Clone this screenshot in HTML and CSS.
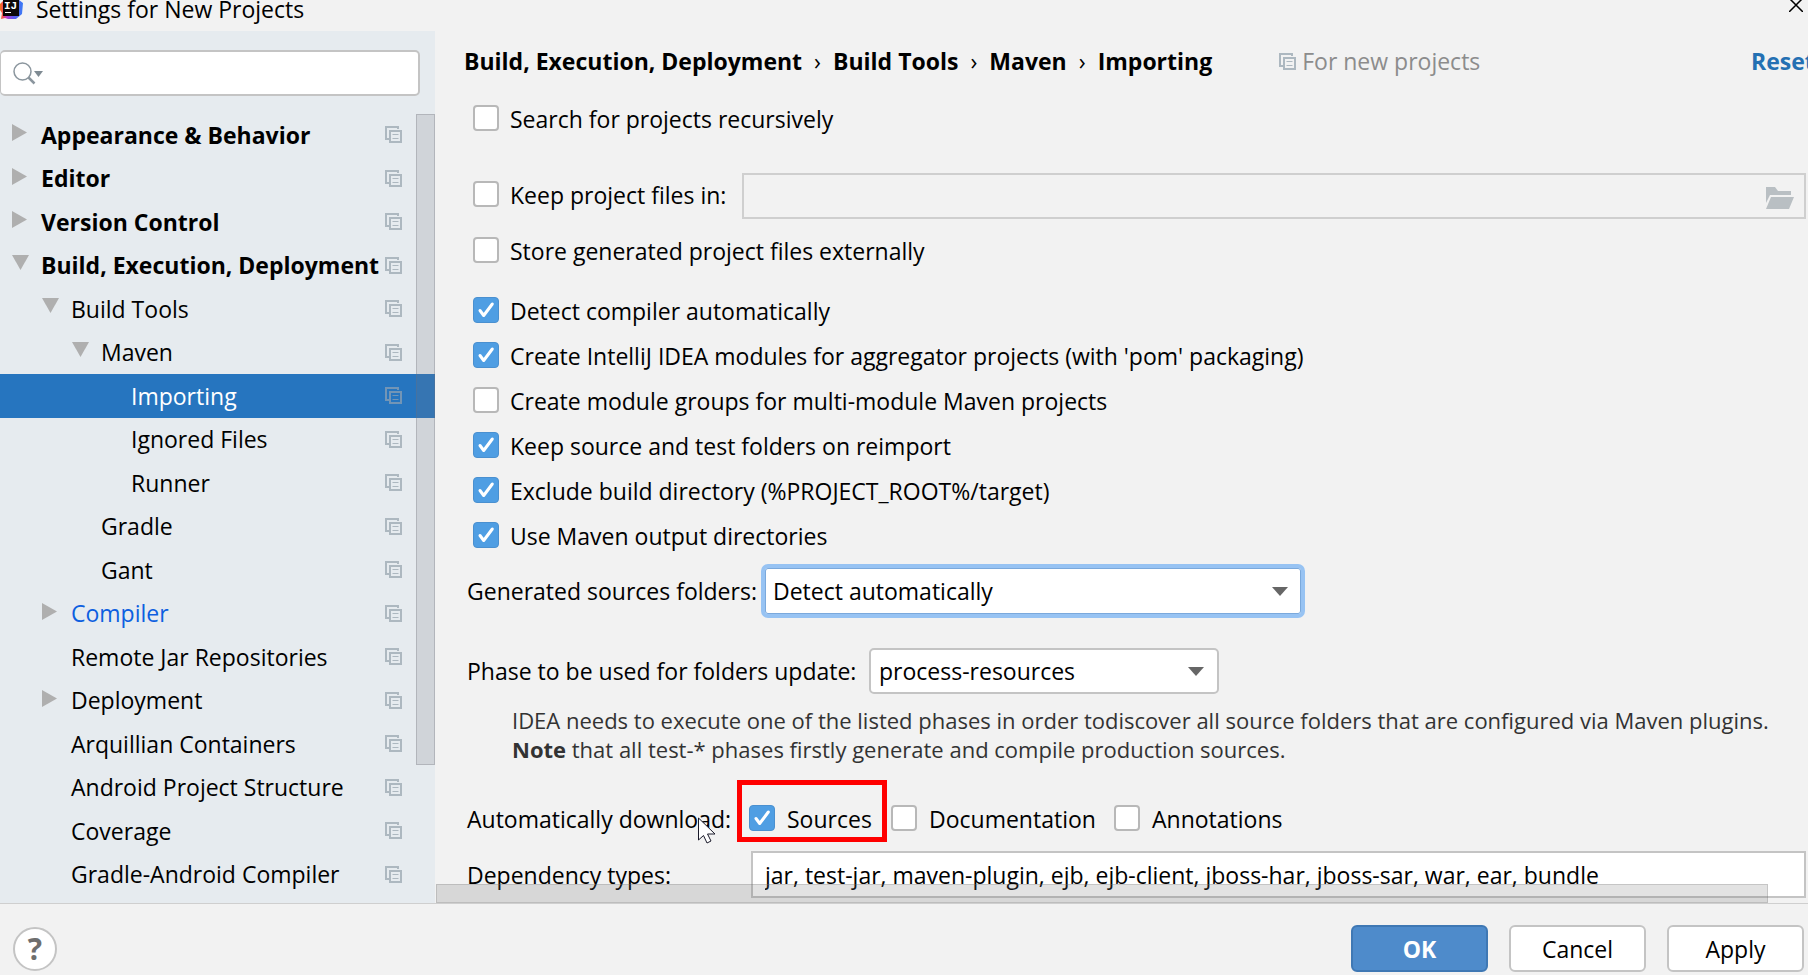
FILE: index.html
```html
<!DOCTYPE html>
<html lang="en">
<head>
<meta charset="utf-8">
<title>Settings for New Projects</title>
<link rel="stylesheet" href="styles.css">
</head>
<body>
<svg class="sprite" aria-hidden="true">
  <symbol id="copy" viewBox="0 0 17 17">
    <path d="M13 3V1H1v12h3" fill="none" stroke="currentColor" stroke-width="2"/>
    <path d="M5 5h11v11H5z" fill="none" stroke="currentColor" stroke-width="2"/>
    <path d="M7.500 8.500h6M7.500 12.500h6" stroke="currentColor" stroke-width="1.200"/>
  </symbol>
  <symbol id="right" viewBox="0 0 17 17"><path d="M0 0l15 8.500-15 8.500z" fill="#afafaf"/></symbol>
  <symbol id="down" viewBox="0 0 17 17"><path d="M0 0h17L8.500 15z" fill="#afafaf"/></symbol>
  <symbol id="caret" viewBox="0 0 16 9"><path d="M0 0h16L8 9z" fill="#666"/></symbol>
</svg>
<div class="window">
  <header class="titlebar">
    <svg class="logo" width="24" height="20" viewBox="0 0 24 20" aria-hidden="true">
      <defs><linearGradient id="lg" x1="0" x2="1"><stop offset="0" stop-color="#f97a12"/><stop offset=".15" stop-color="#f0476a"/><stop offset=".3" stop-color="#b23bd0"/><stop offset=".6" stop-color="#5a5cf0"/><stop offset="1" stop-color="#3a7cf5"/></linearGradient></defs>
      <path d="M0 4l4-4h15l4 3-1 11-6 5H8l-3-1-4 1 1-6-2-3z" fill="url(#lg)"/>
      <path d="M3 0h16v16H3z" fill="#0b0709"/>
      <path d="M5 12.500h6" stroke="#fff" stroke-width="1"/>
      <text x="4" y="9" class="logo-text">IJ</text>
    </svg>
    <h1 class="title">Settings for New Projects</h1>
    <button class="close" aria-label="Close"><svg width="14" height="14" viewBox="0 0 14 14"><path d="M0 0l14 14M14 0L0 14" stroke="#000" stroke-width="1.500"/></svg></button>
  </header>
  <div class="body">
    <aside class="sidebar">
      <div class="search">
        <svg width="30" height="23" viewBox="0 0 30 23" aria-hidden="true"><circle cx="9.500" cy="9.500" r="8.500" fill="none" stroke="#8b969e" stroke-width="1.500"/><path d="M15.500 15.500l6 6" stroke="#8b969e" stroke-width="2.500"/><path d="M21 9h9l-4.500 6z" fill="#7f8b93"/></svg>
        <input type="text" aria-label="Search settings">
      </div>
      <ul class="tree">
        <li class="bold"><svg class="tw"><use href="#right"/></svg><span>Appearance &amp; Behavior</span><svg class="cp"><use href="#copy"/></svg></li>
        <li class="bold"><svg class="tw"><use href="#right"/></svg><span>Editor</span><svg class="cp"><use href="#copy"/></svg></li>
        <li class="bold"><svg class="tw"><use href="#right"/></svg><span>Version Control</span><svg class="cp"><use href="#copy"/></svg></li>
        <li class="bold"><svg class="tw"><use href="#down"/></svg><span>Build, Execution, Deployment</span><svg class="cp"><use href="#copy"/></svg></li>
        <li class="l1"><svg class="tw"><use href="#down"/></svg><span>Build Tools</span><svg class="cp"><use href="#copy"/></svg></li>
        <li class="l2"><svg class="tw"><use href="#down"/></svg><span>Maven</span><svg class="cp"><use href="#copy"/></svg></li>
        <li class="l3 selected"><svg class="tw"></svg><span>Importing</span><svg class="cp"><use href="#copy"/></svg></li>
        <li class="l3"><svg class="tw"></svg><span>Ignored Files</span><svg class="cp"><use href="#copy"/></svg></li>
        <li class="l3"><svg class="tw"></svg><span>Runner</span><svg class="cp"><use href="#copy"/></svg></li>
        <li class="l2"><svg class="tw"></svg><span>Gradle</span><svg class="cp"><use href="#copy"/></svg></li>
        <li class="l2"><svg class="tw"></svg><span>Gant</span><svg class="cp"><use href="#copy"/></svg></li>
        <li class="l1 changed"><svg class="tw"><use href="#right"/></svg><span>Compiler</span><svg class="cp"><use href="#copy"/></svg></li>
        <li class="l1"><svg class="tw"></svg><span>Remote Jar Repositories</span><svg class="cp"><use href="#copy"/></svg></li>
        <li class="l1"><svg class="tw"><use href="#right"/></svg><span>Deployment</span><svg class="cp"><use href="#copy"/></svg></li>
        <li class="l1"><svg class="tw"></svg><span>Arquillian Containers</span><svg class="cp"><use href="#copy"/></svg></li>
        <li class="l1"><svg class="tw"></svg><span>Android Project Structure</span><svg class="cp"><use href="#copy"/></svg></li>
        <li class="l1"><svg class="tw"></svg><span>Coverage</span><svg class="cp"><use href="#copy"/></svg></li>
        <li class="l1"><svg class="tw"></svg><span>Gradle-Android Compiler</span><svg class="cp"><use href="#copy"/></svg></li>
      </ul>
      <div class="vscroll"></div>
    </aside>
    <main class="main">
      <div class="head">
        <nav class="crumbs" aria-label="Breadcrumb">
          <span>Build, Execution, Deployment</span><i>›</i><span>Build Tools</span><i>›</i><span>Maven</span><i>›</i><span>Importing</span>
        </nav>
        <span class="scope"><svg class="cp"><use href="#copy"/></svg>For new projects</span>
        <a class="reset" href="#">Reset</a>
      </div>
      <form class="form">
        <label class="check"><input type="checkbox">Search for projects recursively</label>
        <div class="keep">
          <label class="check"><input type="checkbox">Keep project files in:</label>
          <div class="path">
            <input type="text" aria-label="Project files location" disabled>
            <svg width="28" height="22" viewBox="0 0 28 22" aria-hidden="true"><path d="M0 0h9l3 4h13v4H4L0 16z" fill="#b9bfc3"/><path d="M5 10h23l-5 12H0z" fill="#b9bfc3"/></svg>
          </div>
        </div>
        <label class="check"><input type="checkbox">Store generated project files externally</label>
        <div class="group">
          <label class="check"><input type="checkbox" checked>Detect compiler automatically</label>
          <label class="check"><input type="checkbox" checked>Create IntelliJ IDEA modules for aggregator projects (with 'pom' packaging)</label>
          <label class="check"><input type="checkbox">Create module groups for multi-module Maven projects</label>
          <label class="check"><input type="checkbox" checked>Keep source and test folders on reimport</label>
          <label class="check"><input type="checkbox" checked>Exclude build directory (%PROJECT_ROOT%/target)</label>
          <label class="check"><input type="checkbox" checked>Use Maven output directories</label>
        </div>
        <div class="row generated">
          <label for="gen">Generated sources folders:</label>
          <div class="select focus"><select id="gen"><option>Detect automatically</option></select><svg class="caret"><use href="#caret"/></svg></div>
        </div>
        <div class="row phase">
          <label for="phase">Phase to be used for folders update:</label>
          <div class="select"><select id="phase"><option>process-resources</option></select><svg class="caret"><use href="#caret"/></svg></div>
        </div>
        <p class="hint">IDEA needs to execute one of the listed phases in order todiscover all source folders that are configured via Maven plugins.<br><b>Note</b> that all test-* phases firstly generate and compile production sources.</p>
        <div class="download">
          <span>Automatically download:</span>
          <label class="check marked"><input type="checkbox" checked>Sources</label>
          <label class="check"><input type="checkbox">Documentation</label>
          <label class="check"><input type="checkbox">Annotations</label>
          <svg class="pointer" width="18" height="27" viewBox="0 0 18 27" aria-hidden="true"><path d="M.5 1v22l5-4.500 3.500 7.500 4-2-3.500-7h7.500z" fill="#fff" stroke="#1a1a2a"/></svg>
        </div>
        <div class="deps">
          <label for="deps">Dependency types:</label>
          <input id="deps" type="text" value="jar, test-jar, maven-plugin, ejb, ejb-client, jboss-har, jboss-sar, war, ear, bundle">
        </div>
      </form>
      <div class="hscroll"></div>
    </main>
  </div>
  <footer class="footer">
    <button class="help" aria-label="Help">?</button>
    <button class="btn primary">OK</button>
    <button class="btn">Cancel</button>
    <button class="btn">Apply</button>
  </footer>
</div>
</body>
</html>
```

FILE: styles.css
```css
*, *::after { box-sizing: border-box; }

body {
  margin: 0;
  background: #f2f2f2;
  color: #000;
  font-family: "Open Sans", "Noto Sans", sans-serif;
  font-size: 23px;
  line-height: 30px;
}

input, select, button { font: inherit; color: inherit; }
.sprite { position: absolute; width: 0; height: 0; }

.window { display: flex; flex-direction: column; height: 100vh; overflow: hidden; }

.titlebar { display: flex; align-items: flex-start; height: 31px; padding-right: 5px; }
.title { flex: 1; margin: 0 0 0 12px; font-size: 23px; font-weight: 400; line-height: 18px; }
.logo-text { font: bold 11px "Liberation Mono", monospace; fill: #fff; }
.close { margin-top: -2px; padding: 0; border: 0; background: none; line-height: 0; }

.body { flex: 1; display: flex; min-height: 0; }

.sidebar {
  position: relative;
  display: flex;
  flex-direction: column;
  flex: none;
  width: 435px;
  padding: 19px 0 7px;
  background: #e6ebef;
}
.search {
  display: flex;
  align-items: center;
  gap: 8px;
  height: 46px;
  margin: 0 15px 17px 0;
  padding: 0 12px;
  border: 2px solid #c4c4c4;
  border-left-width: 1px;
  border-radius: 5px;
  background: #fff;
}
.search input { flex: 1; min-width: 0; border: 0; outline: 0; background: none; }

.tree { flex: 1; display: flex; flex-direction: column; margin: 0; padding: 0; list-style: none; }
.tree li { flex: 1; display: flex; align-items: center; gap: 12px; padding: 0 33px 0 12px; white-space: nowrap; }
.tree span { flex: 1; min-width: 0; }
.tree .l1 { padding-left: 42px; }
.tree .l2 { padding-left: 72px; }
.tree .l3 { padding-left: 102px; }
.tree .bold { font-weight: 700; }
.tree .changed { color: #0d5fe0; }
.tree .selected { background: #2675bf; color: #fff; }
.tw { flex: none; width: 17px; height: 17px; margin-bottom: 4px; }
.cp { flex: none; width: 17px; height: 17px; color: #adb8c0; }
.selected .cp { color: #7295b6; }

.vscroll {
  position: absolute;
  top: 83px;
  right: 0;
  width: 19px;
  height: 651px;
  border: 1px solid rgba(110, 110, 120, .3);
  background: rgba(120, 120, 130, .2);
}

.main { position: relative; flex: 1; min-width: 0; overflow: hidden; white-space: nowrap; }
.head { display: flex; align-items: center; height: 60px; padding-left: 29px; }
.crumbs { display: flex; gap: 12px; font-weight: 700; }
.crumbs i { font-style: normal; font-weight: 400; }
.scope { display: flex; align-items: center; gap: 6px; margin-left: 67px; color: #8c8c8c; }
.reset { margin-left: auto; width: 57px; color: #2470b3; font-weight: 700; text-decoration: none; }

.form { padding: 5px 2px 0 32px; }
.check { display: flex; align-items: center; gap: 11px; height: 45px; padding-left: 6px; }
.check input {
  appearance: none;
  flex: none;
  width: 26px;
  height: 26px;
  margin: 0 0 2px;
  border: 2px solid #b8b8b8;
  border-radius: 4px;
  background: #fff;
}
.check input:checked {
  border: 1px solid #4a90d0;
  background: #4f9ee3 url("data:image/svg+xml,%3Csvg xmlns='http://www.w3.org/2000/svg' viewBox='0 0 24 24'%3E%3Cpath d='M6 12.500l3.700 5L18.300 6' fill='none' stroke='white' stroke-width='3' stroke-linecap='round' stroke-linejoin='round'/%3E%3C/svg%3E");
}
.keep { display: flex; align-items: flex-start; gap: 16px; margin: 31px 0 9px; }
.path { position: relative; flex: 1; height: 46px; margin-top: 1px; }
.path input { width: 100%; height: 100%; border: 2px solid #cfcfcf; background: #f2f2f2; }
.path svg { position: absolute; top: 14px; right: 12px; }
.group { margin-top: 15px; }

.row { display: flex; align-items: center; }
.generated { height: 54px; margin-top: 6px; }
.generated label { width: 294px; }
.generated .select { width: 544px; }
.phase { height: 46px; margin-top: 30px; }
.phase label { width: 402px; }
.phase .select { width: 350px; }
.select { position: relative; height: 100%; border: 2px solid #c4c4c4; border-radius: 5px; background: #fff; }
.select.focus { border: 4px solid #97c3f3; border-radius: 7px; box-shadow: inset 0 0 0 1px #7ba9dc; }
.select select { appearance: none; width: 100%; height: 100%; padding: 0 8px; border: 0; outline: 0; background: none; }
.caret { position: absolute; top: 50%; right: 13px; width: 16px; height: 9px; margin-top: -4px; pointer-events: none; }

.hint { margin: 12px 0 0 45px; color: #333; font-size: 22px; line-height: 29px; }

.download { position: relative; display: grid; grid-template-columns: 276px 142px 223px auto; align-items: center; margin-top: 32px; }
.download .check { gap: 12px; }
.marked { position: relative; }
.marked::after { content: ""; position: absolute; top: -16px; left: -6px; width: 150px; height: 62px; border: 5px solid #f00; }
.pointer { position: absolute; top: 21px; left: 231px; }

.deps { display: grid; grid-template-columns: 284px 1fr; align-items: center; margin-top: 10px; }
.deps input { height: 47px; padding: 0 12px; border: 2px solid #c4c4c4; background: #fff; }

.hscroll {
  position: absolute;
  left: 1px;
  right: 40px;
  bottom: 0;
  height: 19px;
  border: 1px solid rgba(110, 110, 110, .25);
  background: rgba(110, 110, 110, .2);
}

.footer { display: flex; align-items: flex-start; gap: 21px; height: 72px; padding: 21px 4px 0 13px; border-top: 1px solid #cfcfcf; }
.help { width: 44px; height: 44px; margin: 2px auto 0 0; padding: 0; border: 2px solid #c4c4c4; border-radius: 50%; background: #fff; color: #6e6e6e; font-size: 30px; font-weight: 700; line-height: 38px; }
.btn { width: 137px; height: 47px; padding: 0; border: 2px solid #c4c4c4; border-radius: 6px; background: #fff; }
.primary { border-color: #3f78b4; background: #4e8bcb; color: #fff; font-weight: 700; }
```
